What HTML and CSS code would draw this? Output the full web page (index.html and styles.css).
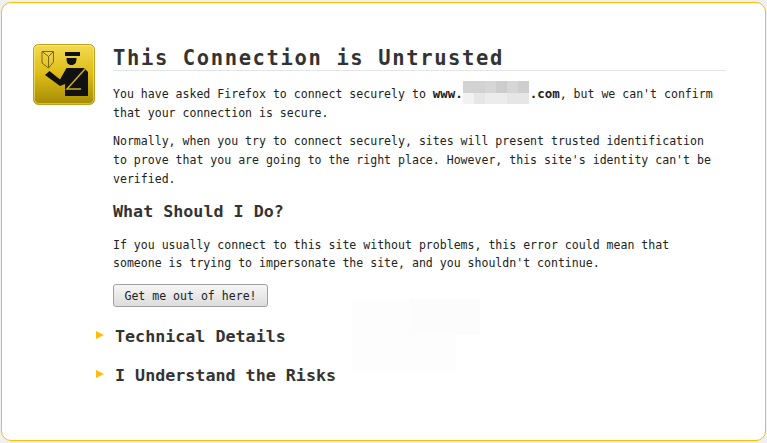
FILE: index.html
```html
<!DOCTYPE html>
<html lang="en">
<head>
    <meta charset="UTF-8">
    <title>Untrusted Connection</title>
    <link rel="stylesheet" href="styles.css">
</head>
<body>
    <div class="container">
        <!-- Officer icon -->
        <svg class="icon" width="62" height="62" viewBox="0 0 62 62">
            <defs>
                <linearGradient id="gold" x1="0" y1="0" x2="0" y2="1">
                    <stop offset="0" stop-color="#f4da50"/>
                    <stop offset="0.5" stop-color="#dcbc16"/>
                    <stop offset="1" stop-color="#a58b05"/>
                </linearGradient>
            </defs>
            <rect x="0.5" y="0.5" width="61" height="60" rx="5" fill="url(#gold)" stroke="#bda21e"/>
            <rect x="1.5" y="1.500" width="59" height="58" rx="4" fill="none" stroke="#fdf09a" stroke-opacity="0.5"/>
            <path d="M9 7.500 H20.500 V18 L15.500 24 L9 19 Z M9 7.500 L15.500 12.500 V24 M15.500 12.500 L20.500 7.500" fill="none" stroke="#7a6610" stroke-width="1"/>
            <path d="M32 8 L47 8 V12 H32 Z M33.500 14 H43.500 C43.500 19 42 21 38.500 21 C35 21 33.500 19 33.500 14 Z" fill="#111"/>
            <path d="M12 31 L16.500 27 L27 35.500 L33.500 24 H51 L55 28 V52 H32 V40 L27 42 Z" fill="#111"/>
            <path d="M52 25 L34 45 H48" fill="none" stroke="#cdae14" stroke-width="1.500"/>
        </svg>

        <div class="content">
            <h1>This Connection is Untrusted</h1>
            <div class="text">
                <p>You have asked Firefox to connect securely to <b>www.<span class="redacted"><span class="pixels"><i></i><i></i><i></i><i></i><i></i><i></i><i></i><i></i><i></i><i></i><i></i><i></i></span></span>.com</b>, but we can't confirm that your connection is secure.</p>
                <p>Normally, when you try to connect securely, sites will present trusted identification to prove that you are going to the right place. However, this site's identity can't be verified.</p>

                <h2>What Should I Do?</h2>
                <p>If you usually connect to this site without problems, this error could mean that someone is trying to impersonate the site, and you shouldn't continue.</p>
            </div>
            <button>Get me out of here!</button>

            <h2 class="expander">Technical Details</h2>
            <h2 class="expander">I Understand the Risks</h2>
        </div>

        <!-- faint smudges left by the redaction -->
        <div class="smudge smudge-a"></div>
        <div class="smudge smudge-b"></div>
    </div>
</body>
</html>
```

FILE: styles.css
```css
html, body {
    height: 100%;
}
body {
    margin: 0;
    padding: 2px 1px;
    box-sizing: border-box;
    background-color: #f0f0f0;
    font-family: "DejaVu Sans Mono", monospace;
    font-size: 11.56px;
    color: #222;
}
.container {
    position: relative;
    height: 100%;
    box-sizing: border-box;
    border: 1px solid #ffbd09;
    border-radius: 10px;
    background-color: #fff;
    display: flex;
    padding: 41px 39px 0 31px;
}
.icon {
    flex: none;
    margin-right: 18px;
}
.content {
    flex: 1;
}
h1 {
    margin: 0 0 14px 0;
    padding-top: 2px;
    border-bottom: 1px solid #e5e5e5;
    font-size: 20.5px;
    letter-spacing: 1.62px;
    line-height: 24px;
    font-weight: bold;
    color: #333;
}
h2 {
    margin: 12px 0 15px 0;
    font-size: 16.7px;
    line-height: 20px;
    font-weight: bold;
    color: #333;
}
.text {
    max-width: 605px;
}
p {
    margin: 0 0 10px 0;
    line-height: 18.7px;
}
b {
    font-size: 12.45px;
    font-weight: bold;
}
.redacted {
    position: relative;
    display: inline-block;
    width: 67px;
    height: 1px;
}
.pixels {
    position: absolute;
    left: 0;
    top: -16px;
    display: grid;
    grid-template-columns: repeat(6, 11px);
    grid-auto-rows: 11.5px;
}
.pixels i:nth-child(1), .pixels i:nth-child(2) { background-color: #d2d2d2; }
.pixels i:nth-child(3) { background-color: #d6d6d6; }
.pixels i:nth-child(4) { background-color: #cccccc; }
.pixels i:nth-child(5) { background-color: #d6d6d6; }
.pixels i:nth-child(6) { background-color: #cecece; }
.pixels i:nth-child(7) { background-color: #f2f2f2; }
.pixels i:nth-child(8) { background-color: #e6e6e6; }
.pixels i:nth-child(9), .pixels i:nth-child(10) { background-color: #ececec; }
.pixels i:nth-child(11), .pixels i:nth-child(12) { background-color: #e6e6e6; }
button {
    display: block;
    width: 155px;
    height: 23px;
    margin-top: 11px;
    padding: 2px 0 0 0;
    background: linear-gradient(#f6f6f6, #dcdcdc);
    border: 1px solid #a0a0a0;
    border-radius: 3px;
    font-family: inherit;
    font-size: 11.56px;
    color: #222;
}
.expander {
    position: relative;
    margin: 19px 0 0 2px;
}
.expander::before {
    content: "";
    position: absolute;
    left: -19px;
    top: 5px;
    border-left: 8px solid #ffbd09;
    border-top: 4px solid transparent;
    border-bottom: 4px solid transparent;
}
.smudge {
    position: absolute;
    background-color: #fdfdfd;
}
.smudge-a {
    left: 350px;
    top: 297px;
    width: 104px;
    height: 72px;
}
.smudge-b {
    left: 407px;
    top: 295px;
    width: 71px;
    height: 37px;
    background-color: #fcfcfc;
}
```
